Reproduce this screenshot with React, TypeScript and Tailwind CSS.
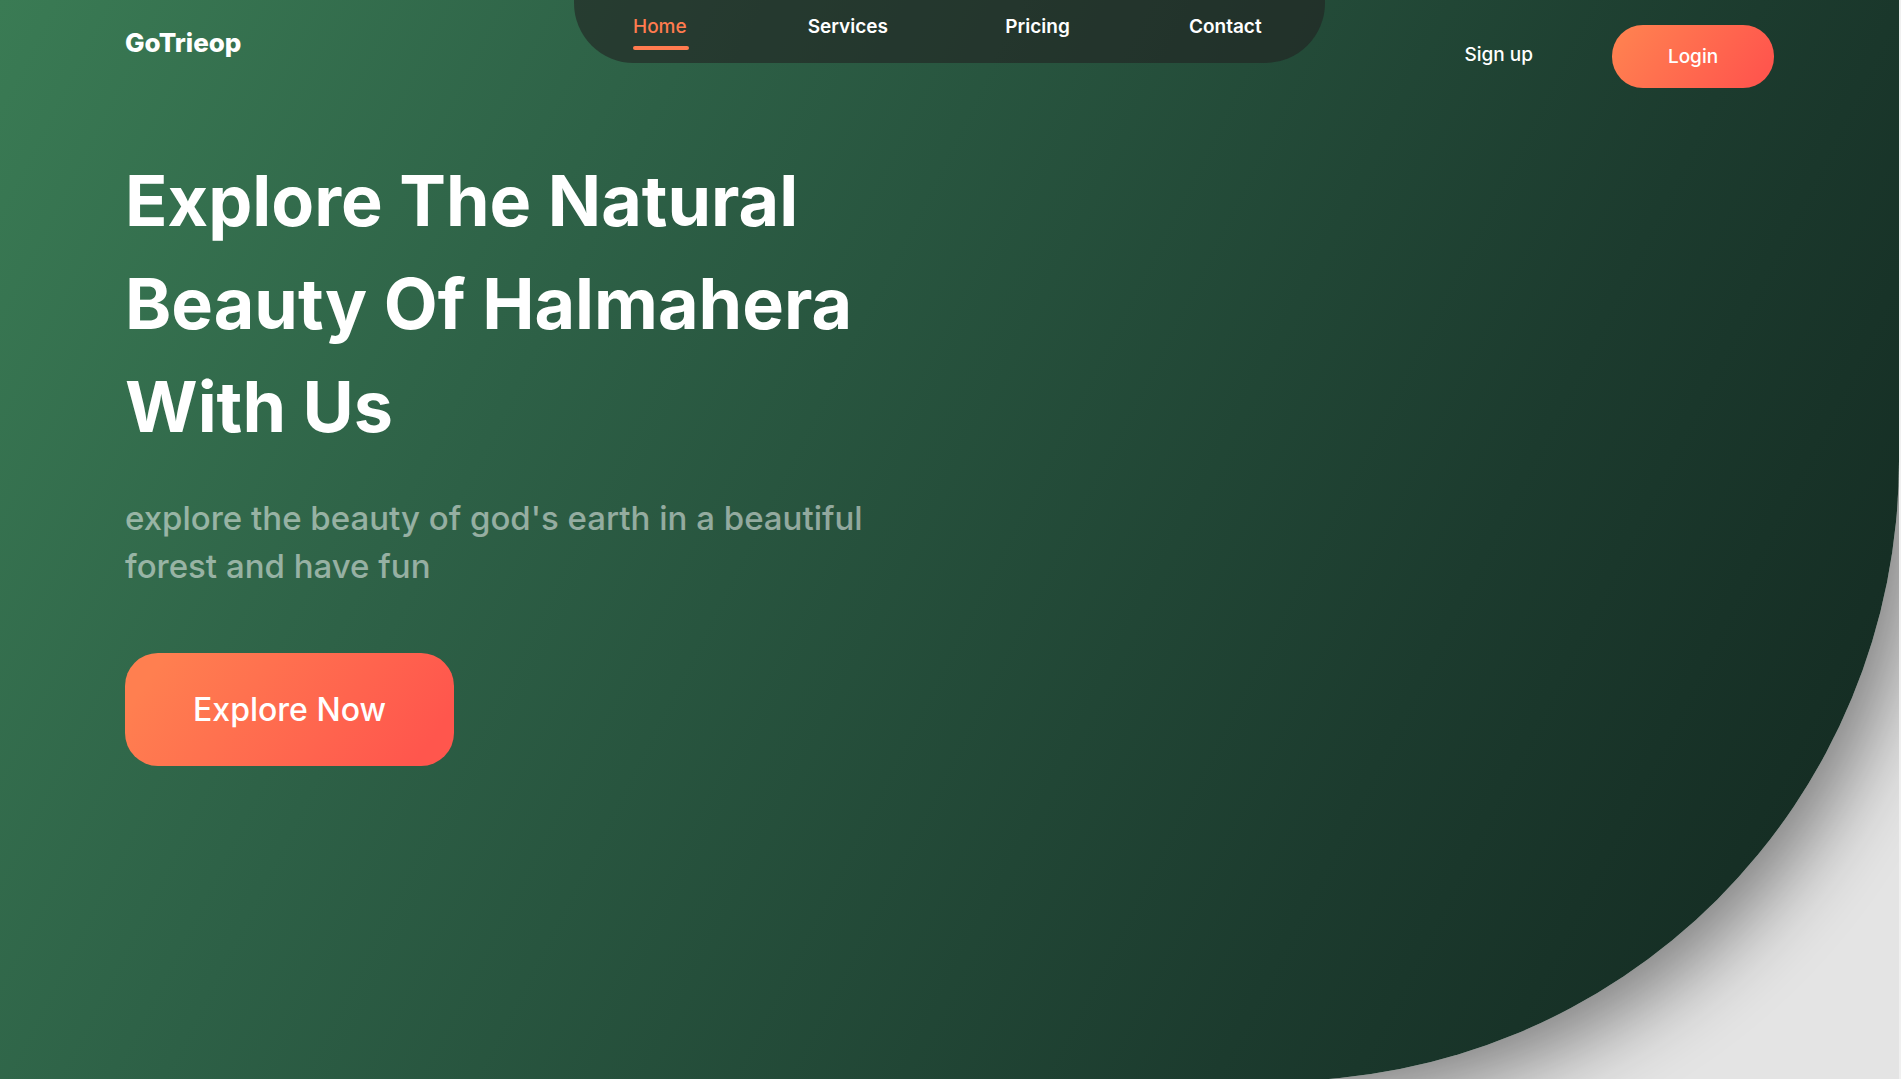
const links = [
  { label: 'Services', width: 'w-[79px]' },
  { label: 'Pricing', width: 'w-[65px]' },
  { label: 'Contact', width: 'w-[77px]' },
];

export default function App() {
  return (
    <div className="min-h-screen bg-[#f0f0f0] pr-0.5 font-['Inter',sans-serif] text-white">
      <div className="h-screen overflow-hidden bg-[#e4e4e4]">
        <div className="min-h-[calc(100vh+2px)] rounded-br-[620px] bg-[linear-gradient(117deg,#3a7b54_0%,#2d6046_29%,#1c3b2e_72%,#12271f_100%)] px-[125px] shadow-[20px_20px_80px_rgba(0,0,0,0.46)]">
          <header className="grid grid-cols-[1fr_auto_1fr] items-start">
            <a href="#" className="pt-[27px] text-[26px] leading-8 font-extrabold">GoTrieop</a>
            <nav className="flex h-[63px] w-[751px] justify-between rounded-b-[60px] bg-[#222222]/60 px-[59px] pt-[15px] text-[19px] leading-6 font-semibold">
              <a href="#" aria-current="page" className="flex w-[56px] flex-col self-start font-medium text-[#ff7b4f]">
                Home
                <span className="mt-[7px] h-1 rounded-full bg-[#ff7b4f]" />
              </a>
              {links.map((l) => (
                <a key={l.label} href="#" className={`${l.width} whitespace-nowrap`}>{l.label}</a>
              ))}
            </nav>
            <div className="flex items-center justify-end gap-[79px] pt-[25px] text-[19px] leading-6 font-medium">
              <a href="#" className="pb-1">Sign up</a>
              <button type="button" className="h-[63px] w-[162px] rounded-[31px] bg-[linear-gradient(125deg,#ff7f50_10%,#ff564d_90%)]">Login</button>
            </div>
          </header>
          <main className="pt-[61px]">
            <h1 className="text-[70px] leading-[103px] font-bold">
              Explore The Natural<br />Beauty Of Halmahera<br />With Us
            </h1>
            <p className="mt-9 text-[33px] leading-[48px] font-medium text-white/50">
              explore the beauty of god's earth in a beautiful<br />forest and have fun
            </p>
            <button type="button" className="mt-[63px] h-[113px] w-[329px] rounded-[33px] bg-[linear-gradient(125deg,#ff7f50_10%,#ff564d_90%)] text-[32px] leading-[48px] font-medium">
              Explore Now
            </button>
          </main>
        </div>
      </div>
    </div>
  );
}
